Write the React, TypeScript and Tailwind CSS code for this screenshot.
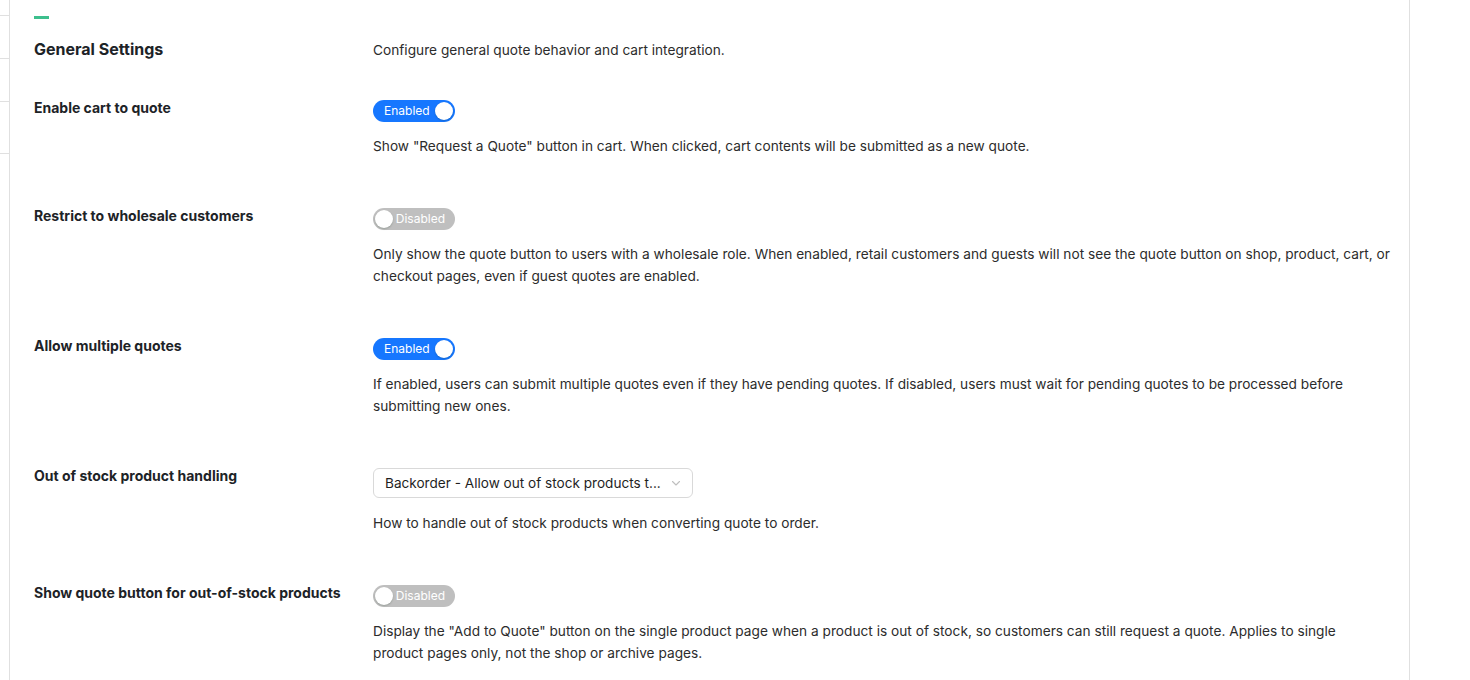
import React from 'react';

const FONT = { fontFamily: 'Inter, "Noto Sans", sans-serif' };

type Row = {
    label: string;
    kind: 'on' | 'off' | 'select';
    desc: string;
};

const rows: Row[] = [
    {
        label: 'Enable cart to quote',
        kind: 'on',
        desc: 'Show "Request a Quote" button in cart. When clicked, cart contents will be submitted as a new quote.',
    },
    {
        label: 'Restrict to wholesale customers',
        kind: 'off',
        desc: 'Only show the quote button to users with a wholesale role. When enabled, retail customers and guests will not see the quote button on shop, product, cart, or checkout pages, even if guest quotes are enabled.',
    },
    {
        label: 'Allow multiple quotes',
        kind: 'on',
        desc: 'If enabled, users can submit multiple quotes even if they have pending quotes. If disabled, users must wait for pending quotes to be processed before submitting new ones.',
    },
    {
        label: 'Out of stock product handling',
        kind: 'select',
        desc: 'How to handle out of stock products when converting quote to order.',
    },
    {
        label: 'Show quote button for out-of-stock products',
        kind: 'off',
        desc: 'Display the "Add to Quote" button on the single product page when a product is out of stock, so customers can still request a quote. Applies to single product\u00a0pages only, not the shop or archive pages.',
    },
];

function Toggle({ on }: { on: boolean }) {
    if (on) {
        return (
            <div className="flex items-center w-[82px] h-[22px] rounded-full bg-[#1677ff] pl-[11px] pr-[2px] justify-between">
                <span className="text-white text-[12px] leading-none">Enabled</span>
                <span className="w-[18px] h-[18px] rounded-full bg-white shadow-[0_1px_2px_rgba(0,35,11,0.2)]"></span>
            </div>
        );
    }
    return (
        <div className="flex items-center w-[82px] h-[22px] rounded-full bg-[#bfbfbf] pl-[2px] pr-[10px] justify-between">
            <span className="w-[18px] h-[18px] rounded-full bg-white shadow-[0_1px_2px_rgba(0,35,11,0.2)]"></span>
            <span className="text-white text-[12px] leading-none">Disabled</span>
        </div>
    );
}

function Select() {
    return (
        <div className="flex items-center justify-between w-[320px] h-[30px] border border-[#d9d9d9] rounded-[6px] bg-white pl-[11px] pr-[10px]">
            <span className="text-[13.6px] text-[#1f1f1f] whitespace-nowrap">Backorder - Allow out of stock products t...</span>
            <svg width="12" height="12" viewBox="0 0 12 12" fill="none" className="shrink-0">
                <path d="M2.5 4.5L6 8l3.5-3.5" stroke="#bfbfbf" strokeWidth="1.1" strokeLinecap="round" strokeLinejoin="round" />
            </svg>
        </div>
    );
}

export default function App() {
    return (
        <div className="flex min-h-[680px] bg-white text-[#1f1f1f]" style={FONT}>
            {/* clipped side menu */}
            <div className="w-[10px] shrink-0 border-r border-[#e0e0e0] flex flex-col">
                <div className="h-[16px] border-b border-[#e0e0e0]"></div>
                <div className="h-[43px] border-b border-[#e0e0e0]"></div>
                <div className="h-[43px] border-b border-[#e0e0e0]"></div>
                <div className="h-[52px] border-b border-[#e0e0e0]"></div>
            </div>

            <div className="w-[1400px] shrink-0 border-r border-[#e0e0e0] pl-[24px] pr-[14px] pt-[16px]">
                <div className="w-[15px] h-[3px] bg-[#3dbf8d]"></div>

                <div className="grid grid-cols-[339px_1fr] mt-[18px] items-center">
                    <h2 className="text-[16px] font-bold leading-[22px] text-[#1d2327]">General Settings</h2>
                    <p className="text-[13.7px] leading-[22px] text-[#2c2c2c] pt-[2px]">Configure general quote behavior and cart integration.</p>
                </div>

                <div className="mt-[39px] flex flex-col gap-[51px]">
                    {rows.map((row) => (
                        <div key={row.label} className="grid grid-cols-[339px_1fr]">
                            <div className="text-[14px] font-bold text-[#1d2327] leading-[16px]">
                                {row.label}
                            </div>
                            <div className="flex flex-col">
                                {row.kind === 'select' ? <Select /> : <Toggle on={row.kind === 'on'} />}
                                <p className={`text-[13.7px] leading-[22px] text-[#2c2c2c] ${row.kind === 'select' ? 'mt-[14px]' : 'mt-[13px]'}`}>
                                    {row.desc}
                                </p>
                            </div>
                        </div>
                    ))}
                </div>
            </div>
        </div>
    );
}
